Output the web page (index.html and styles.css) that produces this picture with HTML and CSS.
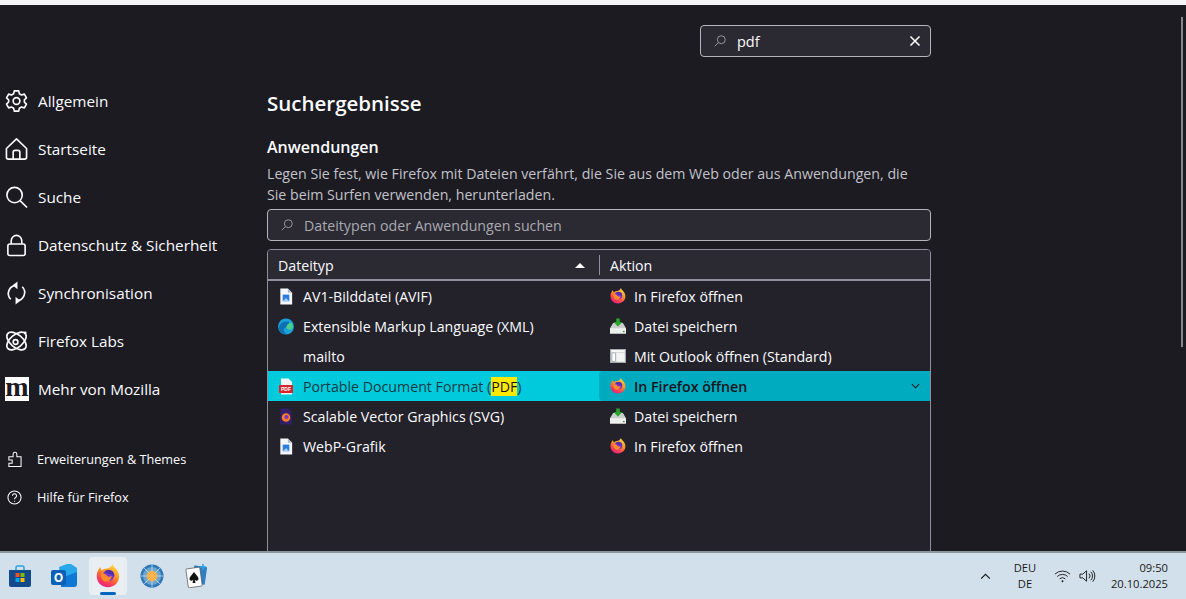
FILE: index.html
```html
<!DOCTYPE html>
<html lang="de">
<head>
    <meta charset="UTF-8">
    <meta name="viewport" content="width=device-width, initial-scale=1.0">
    <title>Einstellungen</title>
    <link rel="stylesheet" href="styles.css">
</head>
<body>
    <svg class="defs" width="0" height="0" aria-hidden="true">
        <defs>
            <linearGradient id="fox-body" x1="0.8" y1="0" x2="0.3" y2="1">
                <stop offset="0" stop-color="#ffe03f"/>
                <stop offset="0.45" stop-color="#ff8f24"/>
                <stop offset="0.8" stop-color="#f8385c"/>
                <stop offset="1" stop-color="#e3208a"/>
            </linearGradient>
            <symbol id="firefox" viewBox="0 0 32 32">
                <path d="M22 0c0 3 6 6 8 12 3 9-3 19-14 19C7 31 1 24 1 16 1 11 3 7 6 4c0 2 1 4 2 5 1-2 4-3 6-3 3 0 6-2 8-6z" fill="url(#fox-body)"/>
                <circle cx="17" cy="15" r="7.500" fill="#7a35cc"/>
                <path d="M12 9.500c3-1.500 7-1.500 10 .5 1.500 2 2 4 1.500 6.500-2-2.500-4-4-7.500-4-2 0-3.500-1-4-3z" fill="#4a2fa8"/>
                <path d="M7 13c3-1 5.500 0 7.500 2.500 2 2 4.500 2 6.500.5-.5 4.500-4 8-8.500 7.500C8 22 6 18 7 13z" fill="#ff8a2a"/>
            </symbol>
            <symbol id="file-image" viewBox="0 0 16 18">
                <path d="M2 .5h8L14.500 5v12.500H2z" fill="#f4f6fa"/>
                <path d="M10 .5V5h4.500z" fill="#aeb8c6"/>
                <rect x="4.500" y="7" width="7" height="7" fill="#2b7be0"/>
                <path d="M4.500 14l3.500-3.500 3.500 3.500z" fill="#9fd0ff"/>
            </symbol>
            <symbol id="save" viewBox="0 0 18 17">
                <path d="M3.500 5h11L18 11v6H0v-6z" fill="#c9cfcb"/>
                <rect x="0" y="11" width="18" height="6" fill="#eef0ee"/>
                <rect x="14.500" y="14" width="2" height="1.500" fill="#4a9a4a"/>
                <path d="M7 0h4v4h3l-5 5-5-5h3z" fill="#2aa52a"/>
            </symbol>
        </defs>
    </svg>

    <div class="topline"></div>

    <div class="window">
        <nav class="sidebar">
            <ul class="categories">
                <li class="category">
                    <svg class="cat-icon" viewBox="0 0 24 24"><path d="M9.700 1.500h4.600l.7 3 2.200 1.200 3-.9 2.200 4-2.200 2.100v2.200l2.200 2.100-2.200 4-3-.9-2.200 1.200-.7 3H9.700l-.7-3-2.200-1.200-3 .9-2.200-4L3.800 13v-2.200L1.600 8.800l2.200-4 3 .9L9 4.500z"/><circle cx="12" cy="12" r="3.500"/></svg>
                    <span>Allgemein</span>
                </li>
                <li class="category">
                    <svg class="cat-icon" viewBox="0 0 24 24"><path d="M1.500 11.500L12 1.500l10.500 10v9a2 2 0 0 1-2 2h-17a2 2 0 0 1-2-2z"/><path d="M8.500 22.500v-7a2 2 0 0 1 2-2h3a2 2 0 0 1 2 2v7"/></svg>
                    <span>Startseite</span>
                </li>
                <li class="category">
                    <svg class="cat-icon" viewBox="0 0 24 24"><circle cx="10" cy="10" r="8"/><path d="M16 16l7 7"/></svg>
                    <span>Suche</span>
                </li>
                <li class="category">
                    <svg class="cat-icon" viewBox="0 0 24 24"><rect x="3" y="11" width="18" height="12" rx="2"/><path d="M6.500 11V7.500a5.500 5.500 0 0 1 11 0V11"/></svg>
                    <span>Datenschutz &amp; Sicherheit</span>
                </li>
                <li class="category">
                    <svg class="cat-icon" viewBox="0 0 24 24"><path d="M6 18.500A8.500 8.500 0 0 1 12 4"/><path d="M18 5.500A8.500 8.500 0 0 1 12 20"/><path class="solid" d="M13 0v8L8 4z"/><path class="solid" d="M11 16v8l5-4z"/></svg>
                    <span>Synchronisation</span>
                </li>
                <li class="category">
                    <svg class="cat-icon" viewBox="0 0 24 24"><ellipse cx="12" cy="12" rx="12" ry="6.500" transform="rotate(40 12 12)"/><ellipse cx="12" cy="12" rx="12" ry="6.500" transform="rotate(-40 12 12)"/><circle cx="11" cy="13" r="2.500"/><circle class="solid" cx="21" cy="3.500" r="1.500"/></svg>
                    <span>Firefox Labs</span>
                </li>
                <li class="category">
                    <span class="moz-logo">m</span>
                    <span>Mehr von Mozilla</span>
                </li>
            </ul>
            <ul class="sidebar-footer">
                <li class="footer-link">
                    <svg class="foot-icon" viewBox="0 0 16 18"><path d="M6.500 6V3.500a2 2 0 0 1 4-.5v3h4.500v10.500H2V13h3.500V9.500H2V6z"/></svg>
                    <span>Erweiterungen &amp; Themes</span>
                </li>
                <li class="footer-link">
                    <svg class="foot-icon" viewBox="0 0 16 16"><circle cx="8" cy="8" r="7"/><path d="M5.800 6.200a2.200 2.200 0 1 1 3.400 1.800c-.8.500-1.200 1-1.200 1.800"/><path d="M8 11.500v1"/></svg>
                    <span>Hilfe für Firefox</span>
                </li>
            </ul>
        </nav>

        <main class="content">
            <div class="top-search">
                <div class="search-box top">
                    <svg class="lens" viewBox="0 0 16 16"><circle cx="9.500" cy="6.500" r="4.500"/><path d="M6 10l-4 4"/></svg>
                    <span class="search-value">pdf</span>
                    <svg class="clear" viewBox="0 0 12 12"><path d="M1.500 1.500l9 9M10.500 1.500l-9 9"/></svg>
                </div>
            </div>

            <h1>Suchergebnisse</h1>
            <h2>Anwendungen</h2>
            <p class="description">Legen Sie fest, wie Firefox mit Dateien verfährt, die Sie aus dem Web oder aus Anwendungen, die<br>Sie beim Surfen verwenden, herunterladen.</p>

            <div class="search-box filter">
                <svg class="lens" viewBox="0 0 16 16"><circle cx="9.500" cy="6.500" r="4.500"/><path d="M6 10l-4 4"/></svg>
                <span class="placeholder">Dateitypen oder Anwendungen suchen</span>
            </div>

            <div class="handlers">
                <div class="handlers-head">
                    <div class="head-cell type">Dateityp<span class="sort-arrow"></span></div>
                    <div class="head-cell action">Aktion</div>
                </div>
                <div class="row">
                    <div class="cell type"><svg class="type-icon"><use href="#file-image"/></svg>AV1-Bilddatei (AVIF)</div>
                    <div class="cell action"><svg class="act-icon"><use href="#firefox"/></svg>In Firefox öffnen</div>
                </div>
                <div class="row">
                    <div class="cell type">
                        <svg class="type-icon" viewBox="0 0 16 16">
                            <circle cx="8" cy="8" r="8" fill="#1aa0d8"/>
                            <path d="M1 9c1-6 8-8 12-4 2 2 2 4 0 5-2 .5-3-1-5-1-3 0-3 4 0 6-4 1-7-2-7-6z" fill="#0f6fb4"/>
                            <path d="M13 4c2 2 3 6 0 7-2 .5-4-.5-5-2 1-3 3-5 5-5z" fill="#46d28a"/>
                        </svg>Extensible Markup Language (XML)
                    </div>
                    <div class="cell action"><svg class="act-icon save"><use href="#save"/></svg>Datei speichern</div>
                </div>
                <div class="row">
                    <div class="cell type"><span class="type-icon"></span>mailto</div>
                    <div class="cell action">
                        <svg class="act-icon" viewBox="0 0 16 14">
                            <rect x="0.500" y="0.500" width="15" height="13" fill="#d6d9dc" stroke="#a4a9ae"/>
                            <rect x="1.500" y="1" width="13" height="2" fill="#f7f7f7"/>
                            <rect x="2" y="4" width="3.500" height="8.500" fill="#fff" stroke="#8f959a" stroke-width="0.600"/>
                            <rect x="6.500" y="4" width="8" height="8.500" fill="#f4f4f4"/>
                        </svg>Mit Outlook öffnen (Standard)
                    </div>
                </div>
                <div class="row selected">
                    <div class="cell type">
                        <svg class="type-icon" viewBox="0 0 16 16">
                            <path d="M3 0h7.500L14 3.500V16H3z" fill="#f4f5f6"/>
                            <rect x="1" y="6.500" width="14" height="8" rx="1" fill="#d8232a"/>
                            <text class="pdf-label" x="8" y="12.500" text-anchor="middle">PDF</text>
                        </svg><span>Portable Document Format (<mark>PDF</mark>)</span>
                    </div>
                    <div class="cell action"><svg class="act-icon"><use href="#firefox"/></svg>In Firefox öffnen
                        <svg class="chevron" viewBox="0 0 10 6"><path d="M1 1l4 4 4-4"/></svg>
                    </div>
                </div>
                <div class="row">
                    <div class="cell type">
                        <svg class="type-icon" viewBox="0 0 16 18">
                            <path d="M2 .5h8.500L14 4v13.500H2z" fill="#33206a"/>
                            <circle cx="8" cy="10" r="4.500" fill="#ff7a2a"/>
                            <circle cx="8.500" cy="9.500" r="2.200" fill="#7b34c9"/>
                        </svg>Scalable Vector Graphics (SVG)
                    </div>
                    <div class="cell action"><svg class="act-icon save"><use href="#save"/></svg>Datei speichern</div>
                </div>
                <div class="row">
                    <div class="cell type"><svg class="type-icon"><use href="#file-image"/></svg>WebP-Grafik</div>
                    <div class="cell action"><svg class="act-icon"><use href="#firefox"/></svg>In Firefox öffnen</div>
                </div>
            </div>
        </main>

        <div class="scrollbar"></div>
    </div>

    <footer class="taskbar">
        <div class="task-apps">
            <div class="task-app">
                <svg viewBox="0 0 24 24" width="24" height="24">
                    <path d="M8 7V3.500a1.500 1.500 0 0 1 1.500-1.500h5A1.500 1.500 0 0 1 16 3.500V7" fill="none" stroke="#2aa3e0" stroke-width="1.500"/>
                    <path d="M1 6h22v15a2 2 0 0 1-2 2H3a2 2 0 0 1-2-2z" fill="#124a8c"/>
                    <rect x="7.500" y="9" width="4" height="4" fill="#f25022"/>
                    <rect x="12.500" y="9" width="4" height="4" fill="#7fba00"/>
                    <rect x="7.500" y="14" width="4" height="4" fill="#00a4ef"/>
                    <rect x="12.500" y="14" width="4" height="4" fill="#ffb900"/>
                </svg>
            </div>
            <div class="task-app">
                <svg viewBox="0 0 26 24" width="26" height="24">
                    <path d="M8 3l8-3h4l6 4v8l-4 10H10z" fill="#28a8ea"/>
                    <path d="M10 14l16-6v12a3 3 0 0 1-3 3H10z" fill="#0f78d4"/>
                    <rect x="0" y="6" width="15" height="15" rx="2" fill="#0a5fb8"/>
                    <text class="outlook-o" x="7.500" y="18" text-anchor="middle">O</text>
                </svg>
            </div>
            <div class="task-app active">
                <svg width="24" height="24"><use href="#firefox"/></svg>
                <span class="running"></span>
            </div>
            <div class="task-app">
                <svg viewBox="0 0 24 24" width="24" height="24">
                    <circle cx="12" cy="12" r="11.500" fill="#2f79b8"/>
                    <circle cx="12" cy="12" r="9" fill="#6ca7d4"/>
                    <circle cx="12" cy="12" r="5.500" fill="#f3a63b"/>
                    <path d="M12 1v22M1 12h22M4 4l16 16M20 4L4 20" stroke="#cfe3f3" stroke-width="0.700"/>
                    <circle cx="12" cy="12" r="4" fill="#f7b34d"/>
                </svg>
            </div>
            <div class="task-app">
                <svg viewBox="0 0 24 24" width="24" height="24">
                    <rect x="9" y="2" width="13" height="18" rx="1" fill="#2f7fc4" transform="rotate(8 15 11)"/>
                    <rect x="3" y="4" width="14" height="19" rx="1" fill="#fff" stroke="#555" stroke-width="0.700" transform="rotate(-8 10 13)"/>
                    <path d="M10 8c2 3 4.500 4.500 4.500 7 0 1.800-2.500 2.300-3.800.8l.8 3.200H8.500l.8-3.200c-1.300 1.500-3.800 1-3.800-.8C5.500 12.500 8 11 10 8z" fill="#111"/>
                    <path d="M19 0v6M16 3h6" stroke="#2f9fe0" stroke-width="1.500"/>
                </svg>
            </div>
        </div>
        <div class="tray">
            <svg class="tray-chevron" viewBox="0 0 12 8"><path d="M1 6.500l5-5 5 5"/></svg>
            <div class="lang"><span>DEU</span><span>DE</span></div>
            <svg class="tray-icon" viewBox="0 0 18 14"><path d="M1 5a11.500 11.500 0 0 1 16 0M3.500 7.500a8 8 0 0 1 11 0M6 10a4.500 4.500 0 0 1 6 0"/><circle class="dot" cx="9" cy="12.500" r="1"/></svg>
            <svg class="tray-icon speaker" viewBox="0 0 18 14"><path d="M1 5h3l4-3.500v11L4 9H1z"/><path d="M10.500 4.500a3.500 3.500 0 0 1 0 5M12.500 2.500a6.500 6.500 0 0 1 0 9M14.500 1a9 9 0 0 1 0 12"/></svg>
            <div class="clock"><span>09:50</span><span>20.10.2025</span></div>
        </div>
    </footer>
</body>
</html>
```
FILE: styles.css
```css
html, body {
    height: 100%;
    margin: 0;
    overflow: hidden;
}

body {
    display: flex;
    flex-direction: column;
    background-color: #1c1b22;
    color: #fbfbfe;
    font-family: "Open Sans", "Noto Sans", sans-serif;
    font-size: 14.200px;
}

ul {
    list-style: none;
    margin: 0;
    padding: 0;
}

.defs {
    position: absolute;
}

.topline {
    height: 5px;
    background-color: #f4f4f6;
    flex: none;
}

.window {
    flex: 1;
    display: flex;
    min-height: 0;
    overflow: hidden;
    position: relative;
}

/* sidebar */
.sidebar {
    width: 267px;
    flex: none;
    box-sizing: border-box;
    padding: 72px 0 0 5px;
}

.category {
    display: flex;
    align-items: center;
    gap: 10px;
    height: 48px;
    color: #fbfbfe;
    font-size: 15.300px;
}

.cat-icon {
    width: 23px;
    height: 24px;
    flex: none;
    fill: none;
    stroke: #fbfbfe;
    stroke-width: 1.700;
    stroke-linejoin: round;
}

.cat-icon .solid {
    fill: #fbfbfe;
    stroke: none;
}

.moz-logo {
    width: 24px;
    height: 24px;
    flex: none;
    margin-right: -1px;
    background-color: #fff;
    color: #1c1b22;
    font-family: "Liberation Serif", serif;
    font-weight: bold;
    font-size: 28px;
    line-height: 19px;
    text-align: center;
}

.sidebar-footer {
    margin-top: 27px;
    font-size: 12.700px;
}

.footer-link {
    display: flex;
    align-items: center;
    gap: 15px;
    height: 38px;
    padding-left: 2px;
}

.foot-icon {
    width: 15px;
    height: 17px;
    flex: none;
    fill: none;
    stroke: #fbfbfe;
    stroke-width: 1.100;
}

/* main column */
.content {
    width: 664px;
    flex: none;
}

.top-search {
    display: flex;
    justify-content: flex-end;
    margin-top: 20px;
}

.search-box {
    display: flex;
    align-items: center;
    box-sizing: border-box;
    background-color: #2b2a33;
    border: 1px solid #b5b5bb;
    border-radius: 4px;
}

.search-box.top {
    width: 231px;
    height: 32px;
    padding: 0 9px 0 12px;
}

.search-box.filter {
    height: 32px;
    padding: 0 12px;
}

.lens {
    width: 14px;
    height: 14px;
    flex: none;
    fill: none;
    stroke: #a5a5ab;
    stroke-width: 1;
    margin-right: 10px;
}

.search-value {
    flex: 1;
    font-size: 14.500px;
}

.clear {
    width: 12px;
    height: 12px;
    fill: none;
    stroke: #fbfbfe;
    stroke-width: 1.600;
}

.placeholder {
    color: #a9a9b0;
}

h1 {
    margin: 33px 0 0;
    font-size: 20.500px;
    font-weight: 600;
    line-height: 27px;
}

h2 {
    margin: 19px 0 0;
    font-size: 16px;
    font-weight: 600;
    line-height: 22px;
}

.description {
    margin: 5px 0 4px;
    color: #c2c2c8;
    line-height: 21px;
}

/* handlers table */
.handlers {
    margin-top: 8px;
    height: 320px;
    background-color: #23222b;
    border: 1px solid #8f8f9d;
    border-radius: 4px 4px 0 0;
    box-sizing: border-box;
    overflow: hidden;
}

.handlers-head {
    display: flex;
    align-items: center;
    height: 29px;
    padding-top: 1px;
    box-sizing: border-box;
    height: 31px;
    background-color: #2b2a33;
    border-bottom: 2px solid #8f8f9d;
}

.head-cell {
    box-sizing: border-box;
    display: flex;
    align-items: center;
    height: 20px;
    padding-left: 10px;
}

.head-cell.type {
    width: 332px;
    border-right: 1px solid #8f8f9d;
    justify-content: space-between;
    padding-right: 14px;
}

.sort-arrow {
    border-left: 5px solid transparent;
    border-right: 5px solid transparent;
    border-bottom: 5px solid #fbfbfe;
}

.row {
    display: flex;
    height: 30px;
}

.cell {
    display: flex;
    align-items: center;
    box-sizing: border-box;
}

.cell.type {
    width: 331px;
    padding-left: 10px;
}

.cell.action {
    flex: 1;
    padding-left: 11px;
}

.type-icon {
    width: 16px;
    height: 17px;
    flex: none;
    margin-right: 9px;
}

.act-icon {
    width: 16px;
    height: 16px;
    flex: none;
    margin-right: 8px;
}

.pdf-label {
    fill: #fff;
    font-family: "Liberation Sans", sans-serif;
    font-size: 5px;
    font-weight: 700;
}

.row.selected {
    background-color: #00cadb;
    color: #15141a;
}

.row.selected .cell.type {
    color: #0e3a44;
}

.row.selected .cell.action {
    background-color: #00abc0;
    border-radius: 4px 0 0 4px;
    font-weight: 600;
    padding-right: 10px;
}

mark {
    background-color: #ffe900;
    color: #15141a;
}

.chevron {
    width: 9px;
    height: 6px;
    margin-left: auto;
    fill: none;
    stroke: #15141a;
    stroke-width: 1.200;
}

.scrollbar {
    position: absolute;
    top: 12px;
    right: 3px;
    width: 2px;
    height: 330px;
    background-color: #85858a;
}

/* taskbar */
.taskbar {
    height: 48px;
    flex: none;
    box-sizing: border-box;
    display: flex;
    justify-content: space-between;
    align-items: center;
    background-color: #d2e0eb;
    border-top: 2px solid #8d959c;
    color: #1a1a1a;
    font-size: 11.200px;
    padding: 0 18px 0 0;
}

.task-apps {
    display: flex;
    align-items: center;
}

.task-app {
    position: relative;
    display: flex;
    align-items: center;
    justify-content: center;
    width: 38px;
    height: 38px;
    margin-right: 6px;
    border-radius: 4px;
}

.task-app:first-child {
    margin-left: 1px;
}

.task-app.active {
    background-color: #e9eef3;
}

.running {
    position: absolute;
    bottom: 0;
    left: 11px;
    width: 16px;
    height: 3px;
    border-radius: 2px;
    background-color: #0067c0;
}

.outlook-o {
    fill: #fff;
    font-family: "Open Sans", sans-serif;
    font-size: 12px;
    font-weight: 700;
}

.tray {
    display: flex;
    align-items: center;
}

.tray-chevron {
    width: 11px;
    height: 7px;
    margin-right: 18px;
    fill: none;
    stroke: #1a1a1a;
    stroke-width: 1.300;
}

.lang {
    display: flex;
    flex-direction: column;
    align-items: center;
    width: 32px;
    line-height: 16px;
    margin-right: 13px;
}

.tray-icon {
    width: 17px;
    height: 14px;
    fill: none;
    stroke: #1a1a1a;
    stroke-width: 1;
}

.tray-icon .dot {
    fill: #1a1a1a;
    stroke: none;
}

.tray-icon.speaker {
    margin-left: 8px;
    margin-right: 15px;
}

.clock {
    display: flex;
    flex-direction: column;
    align-items: flex-end;
    line-height: 16px;
}
```
